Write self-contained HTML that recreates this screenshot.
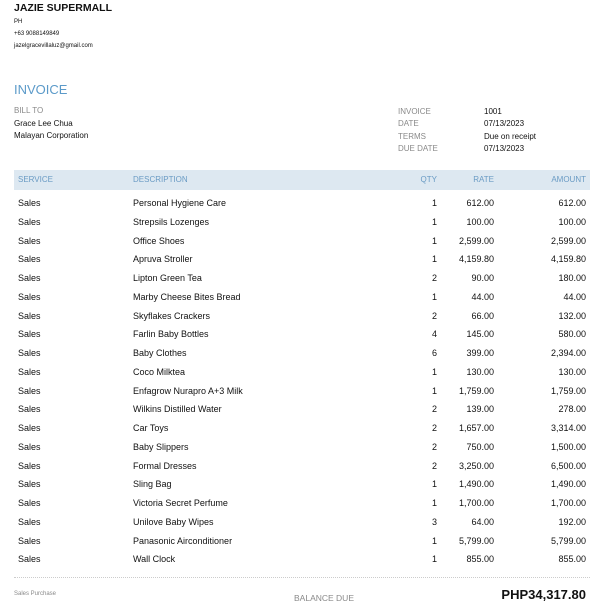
<!DOCTYPE html>
<html><head><meta charset="utf-8"><style>
*{margin:0;padding:0;box-sizing:border-box}
body{width:602px;height:602px;background:#fff;font-family:"Liberation Sans",Arial,sans-serif;color:#111;position:relative;overflow:hidden}
.a{position:absolute;white-space:nowrap}
.g{color:#8a8a8a}
.row{position:absolute;left:0;width:602px;height:19px;font-size:9px}
.row span{position:absolute;top:0}
</style></head><body>
<div class="a" style="left:14px;top:2px;font-size:10.5px;font-weight:bold">JAZIE SUPERMALL</div>
<div class="a" style="left:14px;top:19px;font-size:6px">PH</div>
<div class="a" style="left:14px;top:31px;font-size:6px">+63 9088149849</div>
<div class="a" style="left:14px;top:43px;font-size:6px">jazelgracevillaluz@gmail.com</div>
<div class="a" style="left:14px;top:82px;font-size:13px;color:#5b9ac9">INVOICE</div>
<div class="a g" style="left:14px;top:106px;font-size:8px">BILL TO</div>
<div class="a" style="left:14px;top:119px;font-size:8px">Grace Lee Chua</div>
<div class="a" style="left:14px;top:131px;font-size:8px">Malayan Corporation</div>
<div class="a g" style="left:398px;top:106px;font-size:8px;line-height:12.3px">INVOICE<br>DATE<br>TERMS<br>DUE DATE</div>
<div class="a" style="left:484px;top:106px;font-size:8px;line-height:12.3px">1001<br>07/13/2023<br>Due on receipt<br>07/13/2023</div>
<div class="a" style="left:14px;top:170px;width:576px;height:20px;background:#dde8f1"></div>
<div class="row" style="top:175px;color:#6a9bc4;font-size:8px"><span style="left:18px">SERVICE</span><span style="left:133px">DESCRIPTION</span><span style="right:165px">QTY</span><span style="right:108px">RATE</span><span style="right:16px">AMOUNT</span></div>
<div id="rows"></div>
<div class="a" style="left:14px;top:577px;width:576px;border-top:1px dotted #ccc"></div>
<div class="a g" style="left:14px;top:591px;font-size:6px">Sales Purchase</div>
<div class="a g" style="left:294px;top:593px;font-size:8.5px">BALANCE DUE</div>
<div class="a" style="right:16px;top:587px;font-size:13px;font-weight:bold">PHP34,317.80</div>
<script>
var d=[["Personal Hygiene Care",1,"612.00","612.00"],["Strepsils Lozenges",1,"100.00","100.00"],["Office Shoes",1,"2,599.00","2,599.00"],["Apruva Stroller",1,"4,159.80","4,159.80"],["Lipton Green Tea",2,"90.00","180.00"],["Marby Cheese Bites Bread",1,"44.00","44.00"],["Skyflakes Crackers",2,"66.00","132.00"],["Farlin Baby Bottles",4,"145.00","580.00"],["Baby Clothes",6,"399.00","2,394.00"],["Coco Milktea",1,"130.00","130.00"],["Enfagrow Nurapro A+3 Milk",1,"1,759.00","1,759.00"],["Wilkins Distilled Water",2,"139.00","278.00"],["Car Toys",2,"1,657.00","3,314.00"],["Baby Slippers",2,"750.00","1,500.00"],["Formal Dresses",2,"3,250.00","6,500.00"],["Sling Bag",1,"1,490.00","1,490.00"],["Victoria Secret Perfume",1,"1,700.00","1,700.00"],["Unilove Baby Wipes",3,"64.00","192.00"],["Panasonic Airconditioner",1,"5,799.00","5,799.00"],["Wall Clock",1,"855.00","855.00"]];
var h="";d.forEach(function(r,i){var t=198+i*18.75;h+='<div class="row" style="top:'+t+'px"><span style="left:18px">Sales</span><span style="left:133px">'+r[0]+'</span><span style="right:165px">'+r[1]+'</span><span style="right:108px">'+r[2]+'</span><span style="right:16px">'+r[3]+'</span></div>';});
document.getElementById("rows").innerHTML=h;
</script>
</body></html>
